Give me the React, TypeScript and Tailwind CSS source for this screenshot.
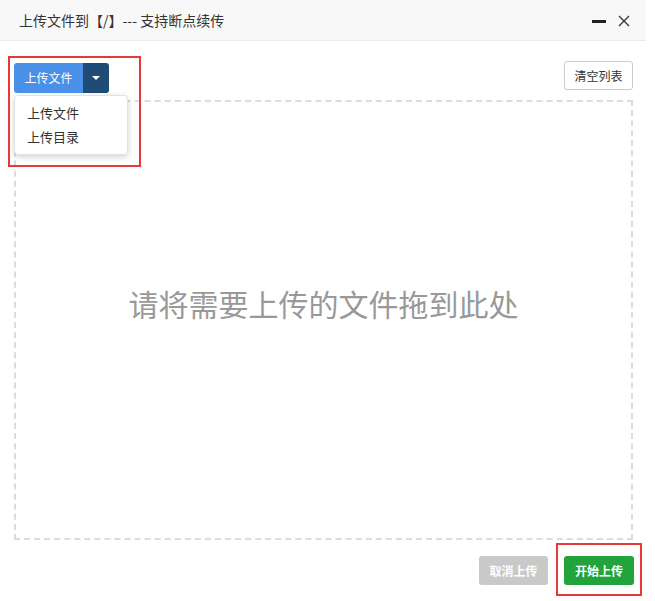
import React from "react";

const font = { fontFamily: '"Noto Sans CJK SC", "Noto Sans", sans-serif' };

export default function App() {
  return (
    <div className="w-[655px] h-[601px] bg-white relative" style={font}>
      <div className="w-[646px] h-[601px] flex flex-col">
        {/* title bar */}
        <div className="h-[41px] bg-[#f8f8f8] border-b border-[#ececec] flex items-center pl-[19px] pr-[16px] shrink-0">
          <div className="text-[14px] text-[#333] flex-1 leading-none">上传文件到【/】--- 支持断点续传</div>
          <div className="flex items-center gap-[12px]">
            <div className="w-[14px] h-[3px] bg-[#222] mt-[3px]" />
            <svg width="12" height="12" viewBox="0 0 12 12" className="mt-[2px]">
              <path d="M1 1 L11 11 M11 1 L1 11" stroke="#333" strokeWidth="1.3" />
            </svg>
          </div>
        </div>

        {/* toolbar */}
        <div className="relative flex justify-between items-start pl-[14px] pr-[13px] pt-[20px] h-[59px] shrink-0">
          <div className="mt-[2px] flex h-[30px] rounded-[3px] overflow-hidden">
            <div className="w-[69px] bg-[#4a90e8] text-white text-[12px] flex items-center justify-center">上传文件</div>
            <div className="w-[26px] bg-[#1f4b75] flex items-center justify-center">
              <div className="w-0 h-0 border-l-[4px] border-r-[4px] border-t-[4px] border-l-transparent border-r-transparent border-t-white" />
            </div>
          </div>
          <div className="h-[29px] w-[69px] border border-[#ccc] rounded-[3px] bg-white text-[12px] text-[#333] flex items-center justify-center">清空列表</div>

          {/* dropdown menu */}
          <div className="absolute left-[14px] top-[54px] w-[114px] h-[60px] bg-white border border-[#e2e2e2] rounded-[4px] shadow-[0_2px_6px_rgba(0,0,0,0.18)] flex flex-col justify-center pl-[12px] gap-[6px] z-10">
            <div className="text-[13px] text-[#333] leading-[18px]">上传文件</div>
            <div className="text-[13px] text-[#333] leading-[18px]">上传目录</div>
          </div>
          {/* annotation */}
          <div className="absolute left-[8px] top-[15px] w-[133px] h-[111px] border-2 border-[#e53a3a] z-20" />
        </div>

        {/* drop zone */}
        <div className="ml-[14px] mr-[13px] h-[440px] border-2 border-dashed border-[#dcdcdc] flex items-center justify-center shrink-0">
          <div className="text-[30px] text-[#999] leading-none mt-[-34px]">请将需要上传的文件拖到此处</div>
        </div>

        {/* footer */}
        <div className="relative flex justify-end gap-[16px] pr-[12px] pt-[16px]">
          <div className="w-[69px] h-[29px] rounded-[3px] bg-[#c9c9c9] text-white text-[12px] font-bold flex items-center justify-center">取消上传</div>
          <div className="w-[70px] h-[29px] rounded-[3px] bg-[#23a33b] text-white text-[12px] font-bold flex items-center justify-center">开始上传</div>
          <div className="absolute right-[4px] top-[3px] w-[86px] h-[53px] border-2 border-[#e53a3a]" />
        </div>
      </div>
    </div>
  );
}
